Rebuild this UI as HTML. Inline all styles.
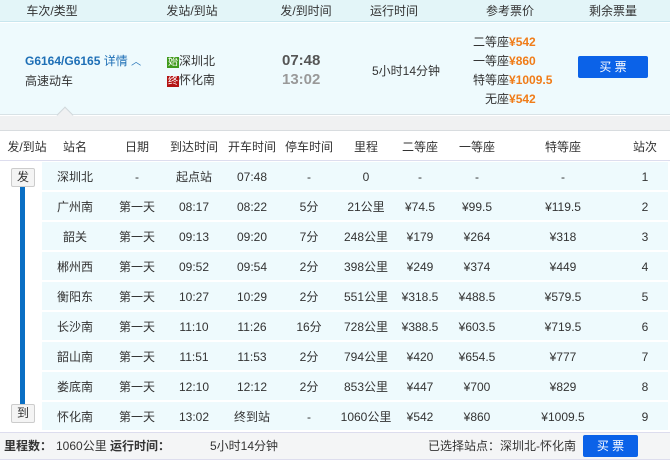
<!DOCTYPE html><html><head><meta charset="utf-8"><style>
*{margin:0;padding:0;box-sizing:border-box}
body{width:670px;height:468px;background:#fff;font-family:"Liberation Sans","Noto Sans CJK SC",sans-serif;font-size:12px;color:#333;position:relative;overflow:hidden}
.a{position:absolute;white-space:nowrap;line-height:14px}
.c{transform:translateX(-50%)}
.p{color:#f07c18;font-weight:bold}
</style></head><body>
<div class="a" style="left:0;top:0;width:670px;height:22px;background:#e3f5f8;border-bottom:1px solid #c8e6ee"></div>
<div class="a c" style="left:52px;top:4px">车次/类型</div>
<div class="a c" style="left:192px;top:4px">发站/到站</div>
<div class="a c" style="left:306px;top:4px">发/到时间</div>
<div class="a c" style="left:394px;top:4px">运行时间</div>
<div class="a c" style="left:510px;top:4px">参考票价</div>
<div class="a c" style="left:613px;top:4px">剩余票量</div>
<div class="a" style="left:0;top:23px;width:670px;height:92px;background:#eefafd;border-bottom:1px solid #d8e2e6"></div>
<div class="a" style="left:25px;top:54px;color:#1e6fb6;font-weight:bold">G6164/G6165 <span style="font-weight:normal">详情</span> <span style="font-size:10px;font-weight:normal">︿</span></div>
<div class="a" style="left:25px;top:74px">高速动车</div>
<div class="a" style="left:167px;top:54px"><span style="background:#3f9a1c;color:#fff;font-size:10px;padding:0 1px">始</span>深圳北</div>
<div class="a" style="left:167px;top:73px"><span style="background:#b31313;color:#fff;font-size:10px;padding:0 1px">终</span>怀化南</div>
<div class="a" style="left:282px;top:53px;font-size:15px;line-height:16px;font-weight:bold;color:#555">07:48</div>
<div class="a" style="left:282px;top:72px;font-size:15px;line-height:16px;font-weight:bold;color:#999">13:02</div>
<div class="a c" style="left:406px;top:64px">5小时14分钟</div>
<div class="a" style="left:473px;top:35px">二等座<span class="p">¥542</span></div>
<div class="a" style="left:473px;top:54px">一等座<span class="p">¥860</span></div>
<div class="a" style="left:473px;top:73px">特等座<span class="p">¥1009.5</span></div>
<div class="a" style="left:485px;top:92px">无座<span class="p">¥542</span></div>
<div class="a" style="left:578px;top:56px;width:70px;height:22px;background:#0b62e8;color:#fff;border-radius:2px;text-align:center;line-height:22px">买 票</div>
<div class="a" style="left:0;top:116px;width:670px;height:15px;background:#f0f1f2;border-bottom:1px solid #d8dcdf"></div>
<div class="a" style="left:59px;top:109px;width:12px;height:12px;background:#f0f1f2;border-left:1px solid #d0d8dc;border-top:1px solid #d0d8dc;transform:rotate(45deg)"></div>
<div class="a" style="left:0;top:132px;width:670px;height:29px;border-bottom:1px solid #dde"></div>
<div id="hd"></div>
<div class="a" style="left:0;top:432px;width:670px;height:28px;background:#f4f5f6;border-top:1px solid #dde;border-bottom:1px solid #dde"></div>
<div class="a" style="left:4px;top:439px;font-weight:bold">里程数：</div>
<div class="a" style="left:56px;top:439px">1060公里 <b>运行时间：</b></div>
<div class="a" style="left:210px;top:439px">5小时14分钟</div>
<div class="a" style="left:428px;top:439px">已选择站点：深圳北-怀化南</div>
<div class="a" style="left:583px;top:435px;width:55px;height:22px;background:#0b62e8;color:#fff;border-radius:2px;text-align:center;line-height:22px">买 票</div>
<div class="a" style="left:20px;top:183px;width:5px;height:228px;background:#0a6fc4"></div>
<div id="rows"></div>
<script>
var H=["发/到站",27,"站名",75,"日期",137,"到达时间",194,"开车时间",252,"停车时间",309,"里程",366,"二等座",420,"一等座",477,"特等座",563,"站次",645];
var s="";for(var i=0;i<H.length;i+=2)s+='<div class="a c" style="left:'+H[i+1]+'px;top:140px">'+H[i]+'</div>';
document.getElementById("hd").outerHTML=s;
var R=[["深圳北","-","起点站","07:48","-","0","-","-","-"],["广州南","第一天","08:17","08:22","5分","21公里","¥74.5","¥99.5","¥119.5"],["韶关","第一天","09:13","09:20","7分","248公里","¥179","¥264","¥318"],["郴州西","第一天","09:52","09:54","2分","398公里","¥249","¥374","¥449"],["衡阳东","第一天","10:27","10:29","2分","551公里","¥318.5","¥488.5","¥579.5"],["长沙南","第一天","11:10","11:26","16分","728公里","¥388.5","¥603.5","¥719.5"],["韶山南","第一天","11:51","11:53","2分","794公里","¥420","¥654.5","¥777"],["娄底南","第一天","12:10","12:12","2分","853公里","¥447","¥700","¥829"],["怀化南","第一天","13:02","终到站","-","1060公里","¥542","¥860","¥1009.5"]];
var X=[75,137,194,252,309,366,420,477,563];s="";
for(var r=0;r<9;r++){var t=162+r*30;s+='<div class="a" style="left:42px;top:'+t+'px;width:626px;height:29px;background:#eefafd;border-bottom:1px solid #fff"></div>';
for(var c=0;c<9;c++)s+='<div class="a c" style="left:'+X[c]+'px;top:'+(t+8)+'px">'+R[r][c]+'</div>';
s+='<div class="a c" style="left:645px;top:'+(t+8)+'px">'+(r+1)+'</div>';}
s+='<div class="a" style="left:11px;top:168px;width:24px;height:19px;background:#f4f4f4;border:1px solid #ccc;border-radius:2px;text-align:center;line-height:17px">发</div>';
s+='<div class="a" style="left:11px;top:404px;width:24px;height:19px;background:#f4f4f4;border:1px solid #ccc;border-radius:2px;text-align:center;line-height:17px">到</div>';
document.getElementById("rows").outerHTML=s;
</script>
</body></html>
